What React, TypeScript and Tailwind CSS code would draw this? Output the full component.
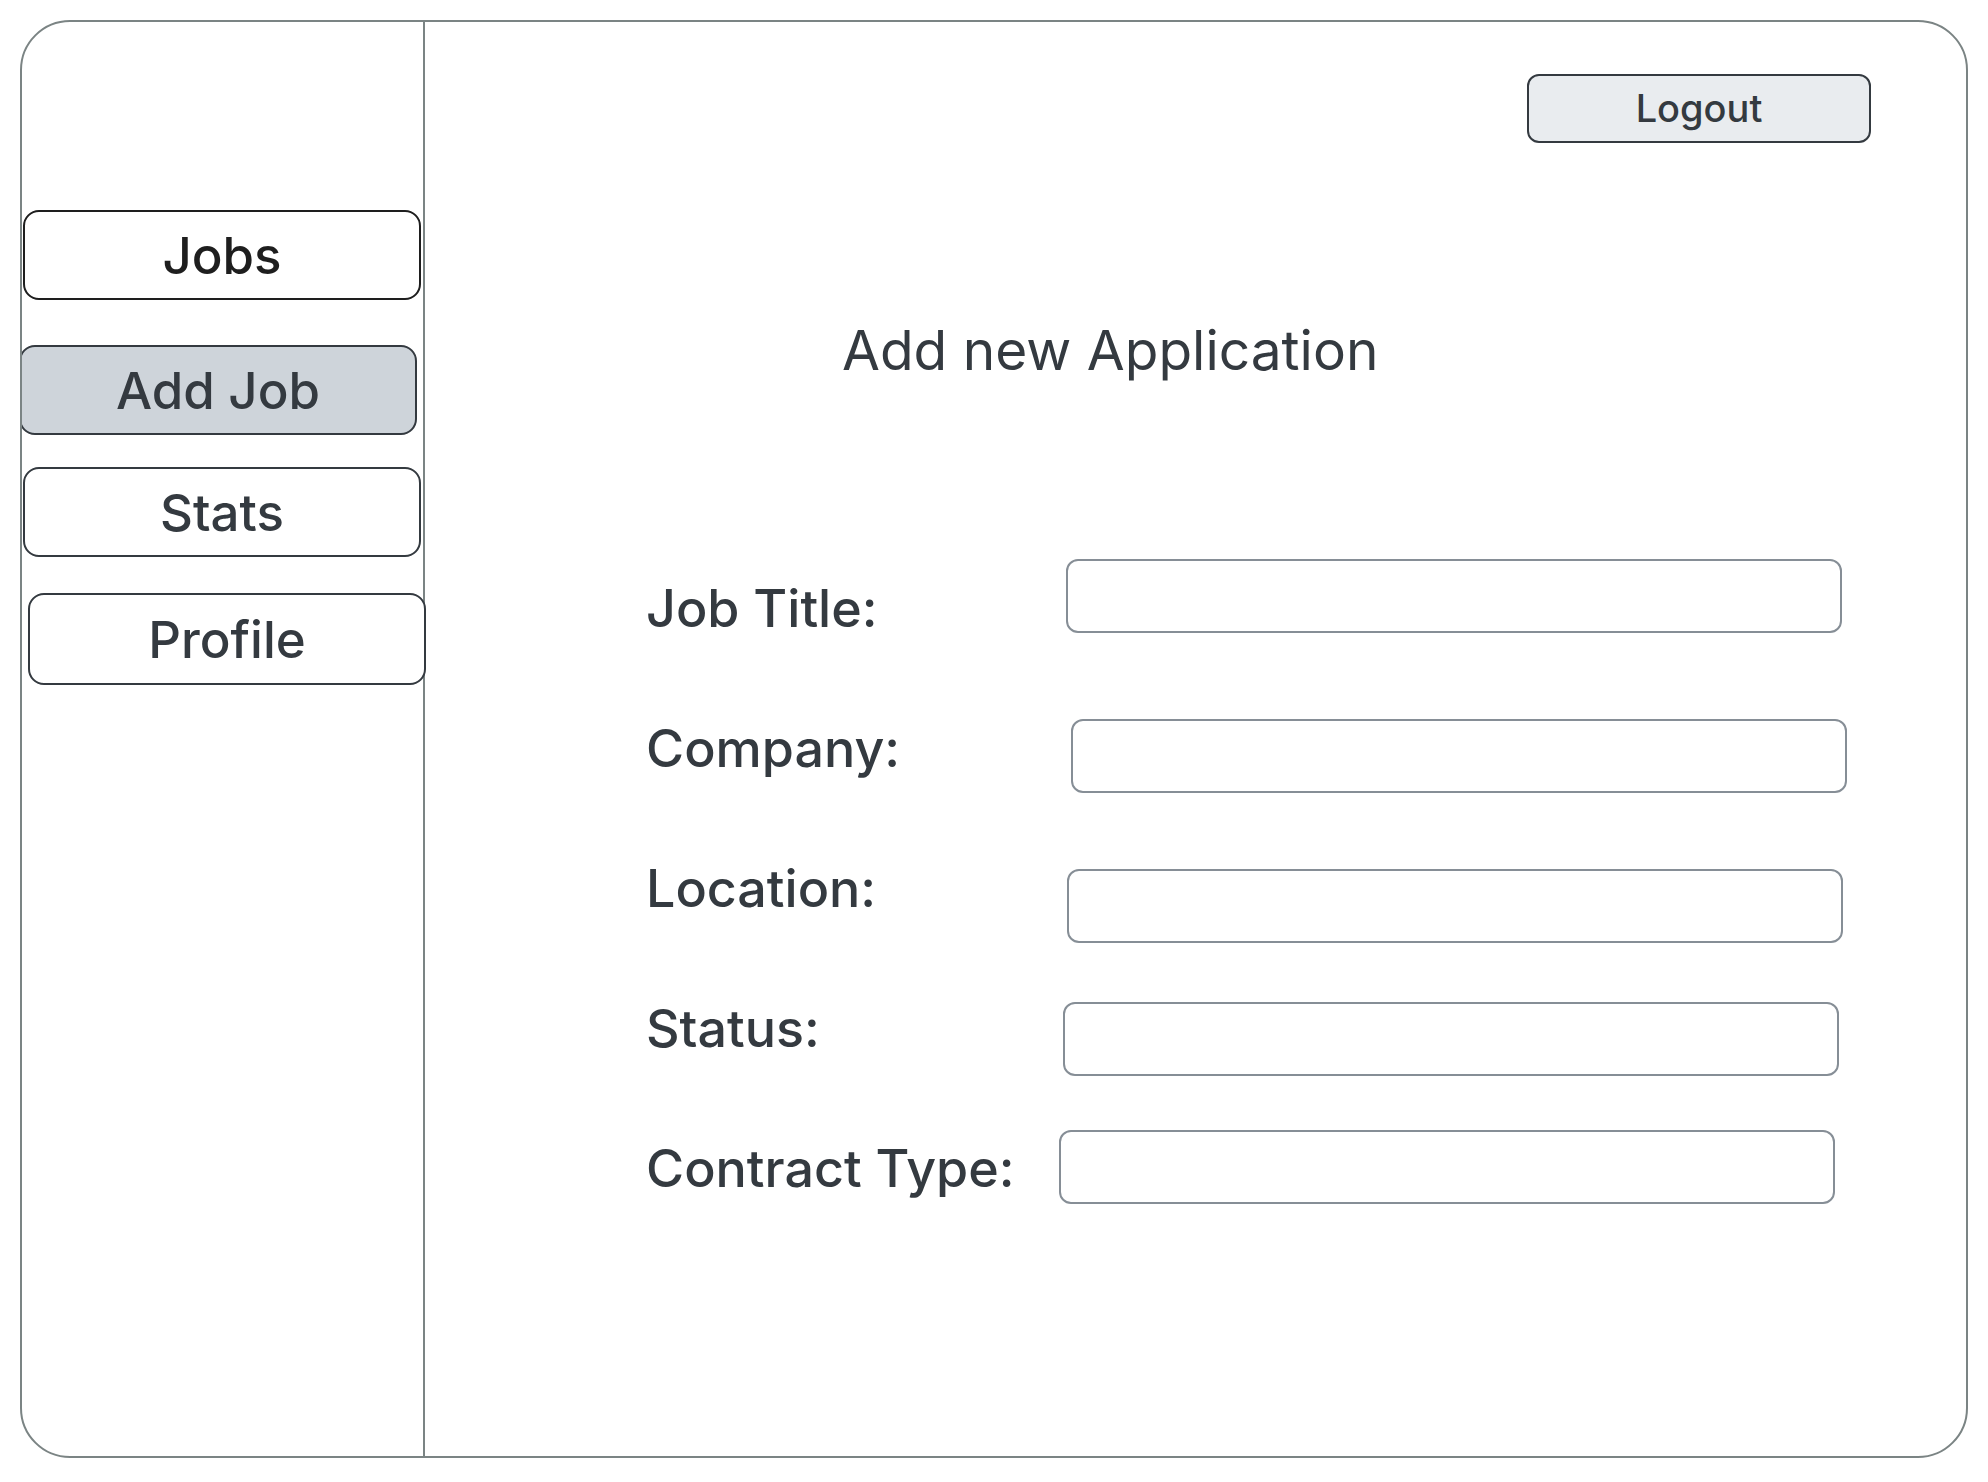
import React from "react";

const font = { fontFamily: 'Inter, "Open Sans", sans-serif' };

function NavButton({
  label,
  className,
}: {
  label: string;
  className: string;
}) {
  return (
    <div
      className={`flex items-center justify-center rounded-[16px] border-2 text-[51px] font-medium leading-none ${className}`}
    >
      {label}
    </div>
  );
}

export default function App() {
  const labels = ["Job Title:", "Company:", "Location:", "Status:", "Contract Type:"];
  return (
    <div className="w-[1988px] h-[1482px] bg-white pt-[20px] pl-[20px]" style={font}>
      <div className="w-[1948px] h-[1438px] rounded-[50px] border-2 border-[#7b8484] flex overflow-hidden">
        {/* Sidebar */}
        <div className="w-[403px] shrink-0 border-r-2 border-[#7b8484] flex flex-col pt-[188px]">
          <NavButton label="Jobs" className="ml-[1px] w-[398px] h-[90px] border-[#1e1e1e] text-[#1e1e1e] bg-white" />
          <NavButton label="Add Job" className="-ml-[3px] mt-[45px] w-[398px] h-[90px] border-[#343a40] text-[#343a40] bg-[#ced4da]" />
          <NavButton label="Stats" className="ml-[1px] mt-[32px] w-[398px] h-[90px] border-[#343a40] text-[#343a40] bg-white" />
          <NavButton label="Profile" className="ml-[6px] mt-[36px] w-[398px] h-[92px] border-[#343a40] text-[#343a40] bg-white" />
        </div>
        {/* Main */}
        <div className="flex-1 flex flex-col">
          <div className="flex justify-end pt-[52px] pr-[95px]">
            <div className="w-[344px] h-[69px] rounded-[12px] border-2 border-[#343a40] bg-[#e9ecef] flex items-center justify-center text-[38px] font-medium text-[#343a40]">
              Logout
            </div>
          </div>
          <div className="ml-[417px] mt-[180px] text-[55px] leading-none text-[#343a40]">
            Add new Application
          </div>
          <div className="flex mt-[161px]">
            <div className="ml-[221px] w-[420px] flex flex-col text-[52px] font-medium text-[#343a40] leading-[140px]">
              {labels.map((l) => (
                <div key={l} className="h-[140px] whitespace-nowrap">
                  {l}
                </div>
              ))}
            </div>
            <div className="flex flex-col">
              <div className="mt-[20px] w-[776px] h-[74px] rounded-[12px] border-2 border-[#868e96] bg-white" />
              <div className="ml-[5px] mt-[86px] w-[776px] h-[74px] rounded-[12px] border-2 border-[#868e96] bg-white" />
              <div className="ml-[1px] mt-[76px] w-[776px] h-[74px] rounded-[12px] border-2 border-[#868e96] bg-white" />
              <div className="-ml-[3px] mt-[59px] w-[776px] h-[74px] rounded-[12px] border-2 border-[#868e96] bg-white" />
              <div className="-ml-[7px] mt-[54px] w-[776px] h-[74px] rounded-[12px] border-2 border-[#868e96] bg-white" />
            </div>
          </div>
        </div>
      </div>
    </div>
  );
}
